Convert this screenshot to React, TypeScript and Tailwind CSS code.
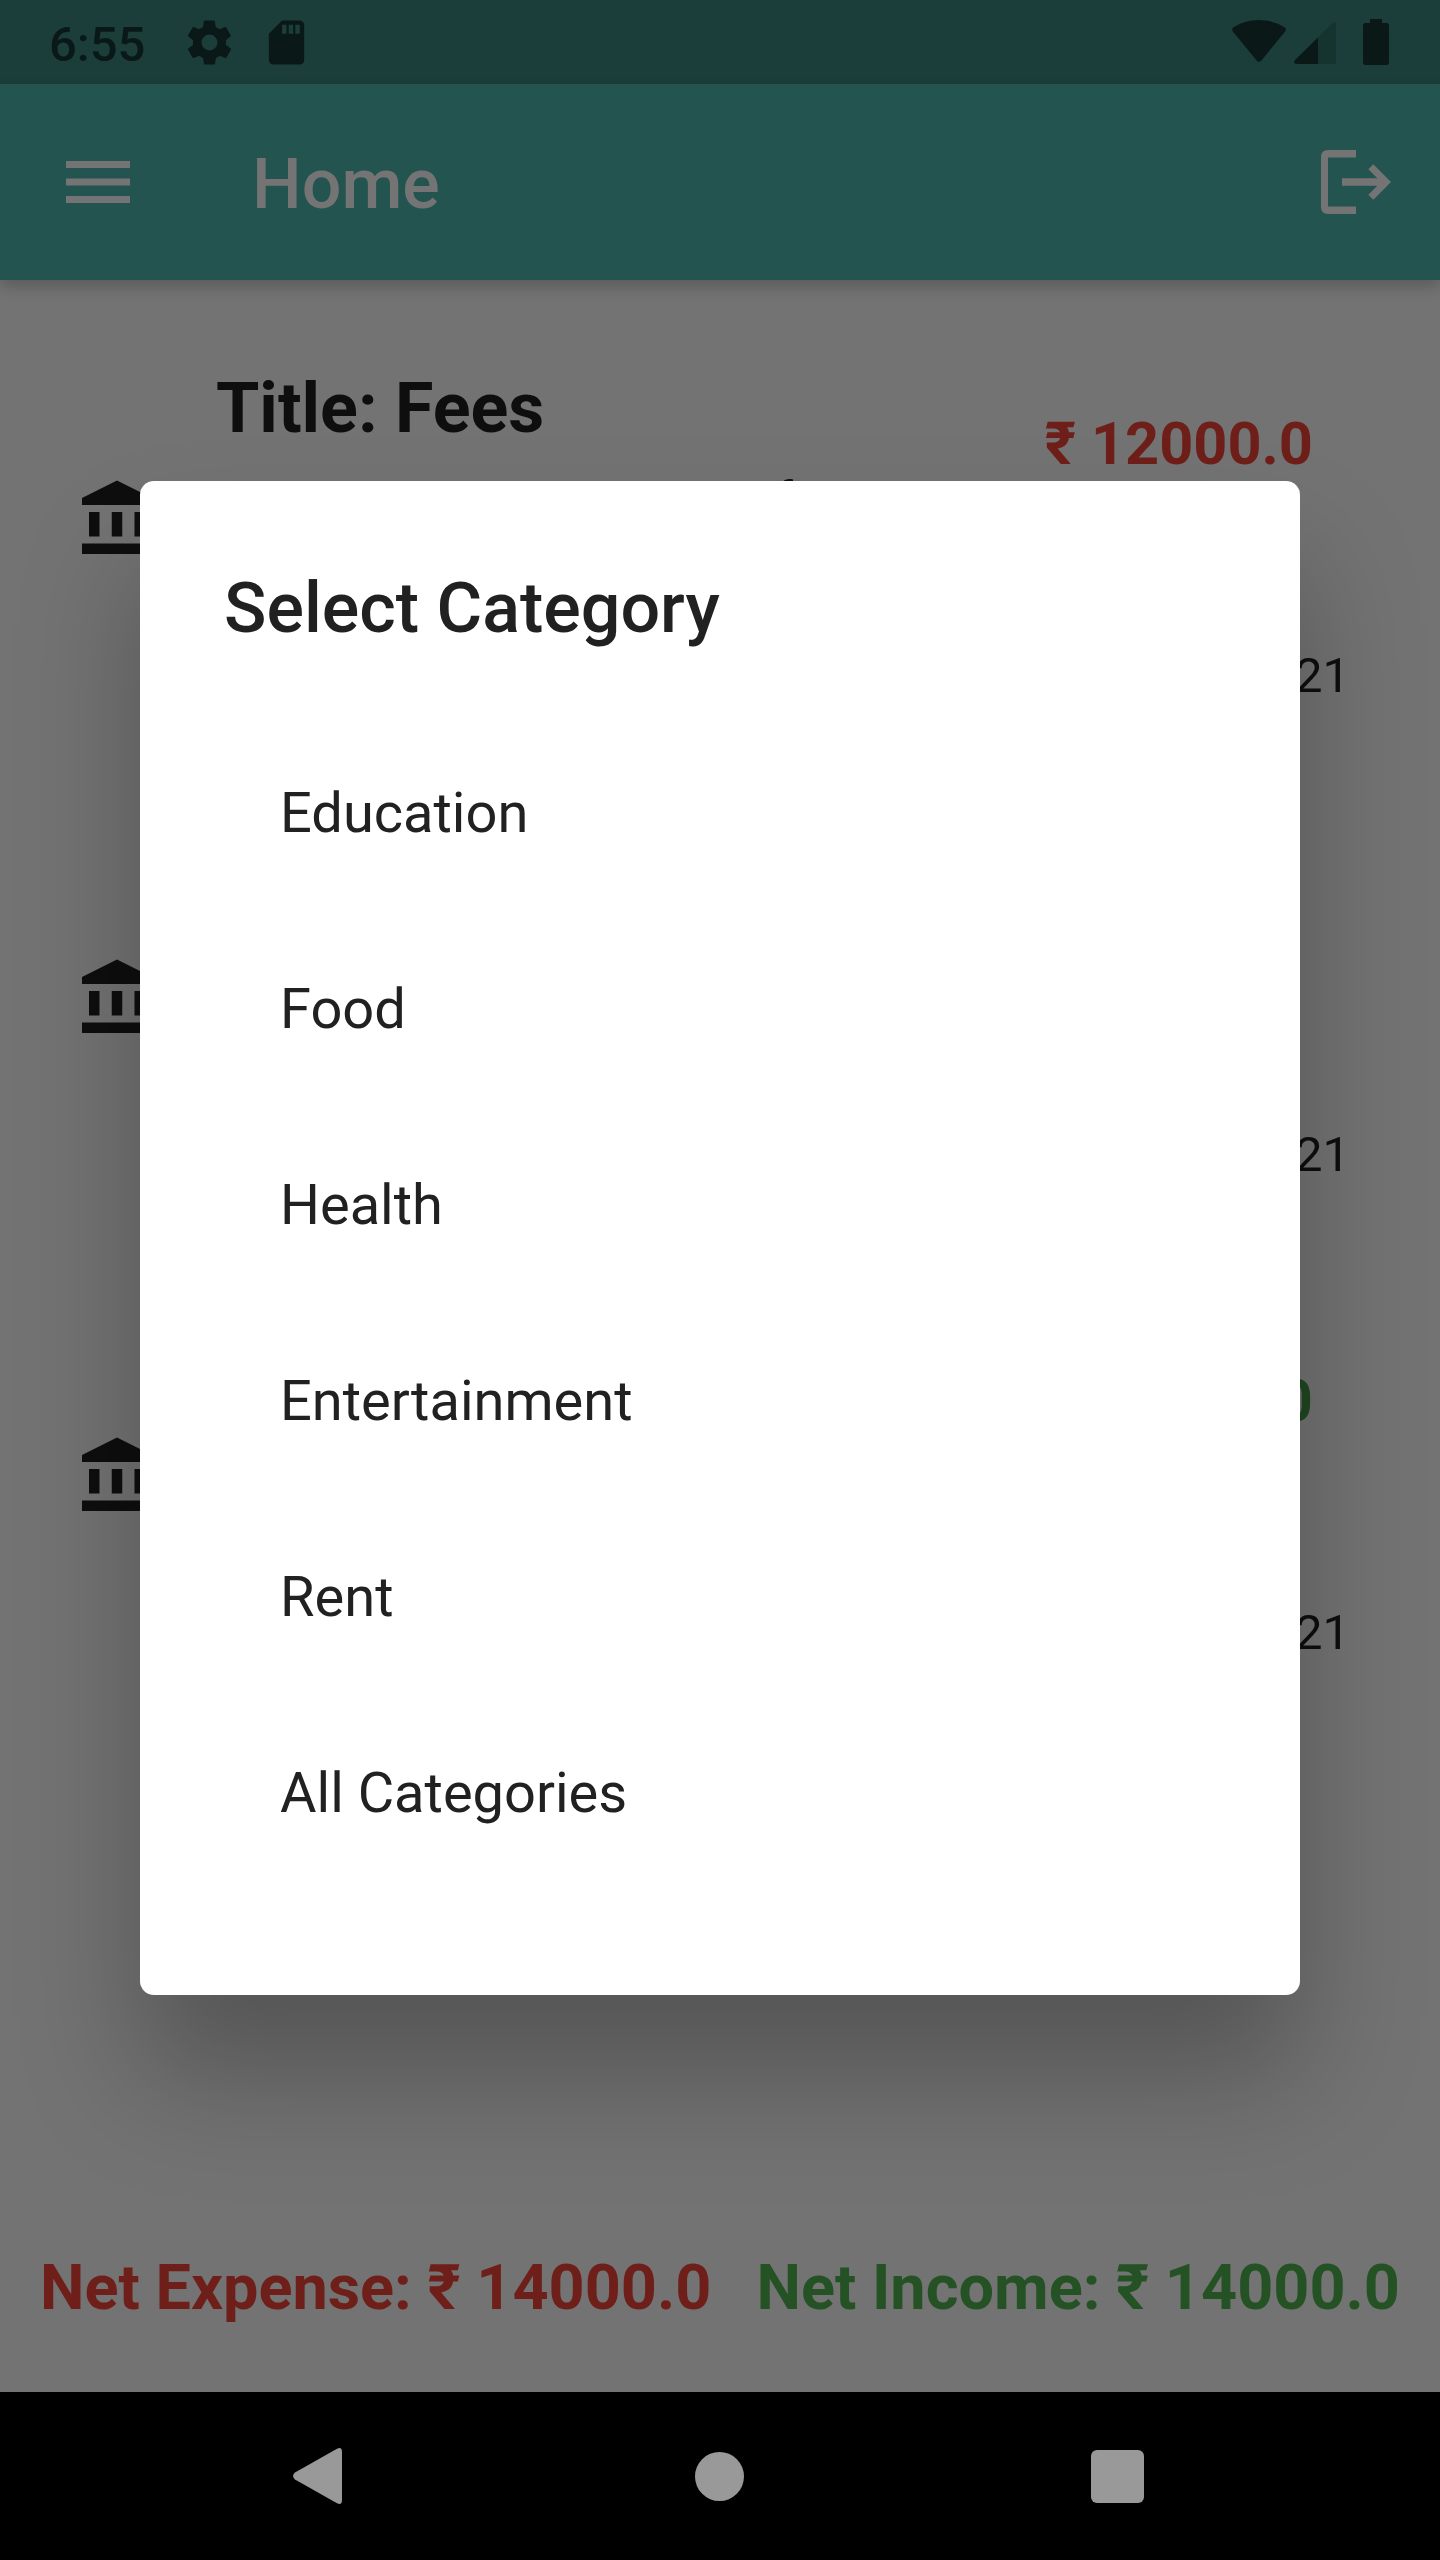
import React from "react";

const categories = ["Education", "Food", "Health", "Entertainment", "Rent", "All Categories"];

type Transaction = { id: number; title?: string; detail?: string; amount?: string; tone?: string; date: string };

const transactions: Transaction[] = [
  { id: 1, title: "Title: Fees", detail: "Description: Expenses of term", amount: "₹ 12000.0", tone: "text-[#6f1f1a]", date: "2021" },
  { id: 2, date: "2021" },
  { id: 3, amount: "₹ 14000.0", tone: "text-[#1f4720]", date: "2021" },
];

function StatusBar() {
  return (
    <div className="flex h-[84px] shrink-0 items-start bg-[#1b3e3a] pl-[49px] text-[#0a1917]">
      <span className="mt-4 w-[134px] text-[49px] leading-[57px] font-medium">6:55</span>
      <svg className="mt-4 h-[53px] w-[53px]" viewBox="0 0 24 24" fill="currentColor">
        <path d="M19.4 13c0-.3.1-.6.1-1s0-.7-.1-1l2.1-1.7c.2-.1.2-.4.1-.6l-2-3.5c-.1-.2-.4-.3-.6-.2l-2.5 1c-.5-.4-1.1-.7-1.7-1l-.4-2.6c0-.2-.2-.4-.5-.4h-4c-.2 0-.4.2-.5.4L9.1 5c-.6.3-1.2.6-1.7 1L4.9 5c-.2-.1-.5 0-.6.2l-2 3.5c-.1.2-.1.5.1.6L4.600 11c0 .3-.1.6-.1 1s0 .7.1 1l-2.200 1.700c-.2.100-.2.400-.1.600l2 3.500c.1.200.4.300.6.200l2.500-1c.5.400 1.100.7 1.700 1l.4 2.600c0 .2.200.4.500.4h4c.3 0 .5-.2.500-.4l.4-2.600c.6-.3 1.200-.6 1.700-1l2.500 1c.2.100.5 0 .6-.2l2-3.500c.1-.2.1-.5-.1-.6zM12 15.600a3.600 3.600 0 1 1 0-7.200 3.600 3.600 0 0 1 0 7.200z" />
      </svg>
      <svg className="mt-4 ml-[24px] h-[53px] w-[53px]" viewBox="0 0 24 24" fill="currentColor">
        <path d="M18 2h-8L4 8v12c0 1.100.9 2 2 2h12c1.100 0 2-.9 2-2V4c0-1.100-.9-2-2-2zm-6 6h-2V4h2v4zm3 0h-2V4h2v4zm3 0h-2V4h2v4z" />
      </svg>
      <svg className="mt-[19px] ml-auto h-[44px] w-[54px]" viewBox="0 0 54 44" fill="currentColor">
        <path d="M1.200 8.500Q12 1 27 1t25.800 7.500q1.800 1.800.5 3.700L29.200 41.700q-2.200 2-4.400 0L.7 12.200Q-.6 10.300 1.200 8.500z" />
      </svg>
      <svg className="mt-[21px] ml-2 h-[43px] w-[42px]" viewBox="0 0 42 43" fill="currentColor">
        <path opacity=".3" d="M24 16.500 38.500 2q3.500-2 3.500 1.500v37q0 2.500-2.500 2.500H24z" />
        <path d="M24 16.500V43H2.500q-4-.5-1.500-4z" />
      </svg>
      <svg className="mt-[19px] mr-[51px] ml-[27px] h-[46px] w-[26px]" viewBox="0 0 26 46" fill="currentColor">
        <path d="M7 0h12v4h4.500Q26 4 26 6.500v37q0 2.500-2.500 2.500h-21Q0 46 0 43.500v-37Q0 4 2.500 4H7z" />
      </svg>
    </div>
  );
}

function AppBar() {
  return (
    <header className="relative flex h-[196px] shrink-0 items-center bg-[#24544f] pr-[49px] pl-[66px] text-[#747474] shadow-[0_7px_14px_rgba(0,0,0,0.2)]">
      <svg className="h-[42px] w-16" viewBox="0 0 64 42" fill="currentColor">
        <path d="M0 0h64v7H0zM0 17.500h64v7H0zM0 35h64v7H0z" />
      </svg>
      <h1 className="mt-[3px] ml-[122px] text-[70px] leading-[82px] font-medium">Home</h1>
      <svg className="ml-auto h-16 w-[70px]" viewBox="0 0 70 64" fill="currentColor">
        <path d="M7 0h28v7.500H7v49h28V64H7q-7 0-7-7V7q0-7 7-7z" />
        <path d="M21 28.300h35.300l-9-9 5-5L70 32 52.300 49.700l-5-5 9-9H21z" />
      </svg>
    </header>
  );
}

function TransactionRow({ item }: { item: Transaction }) {
  return (
    <li className="flex h-[478.5px] shrink-0 pt-[87px] pr-[90px] pl-[75px]">
      <svg className="mt-[110px] h-[84px] w-[84px] shrink-0 text-[#0e0e0e]" viewBox="0 0 24 24" fill="currentColor">
        <path d="M4 10h3v7H4zM10.500 10h3v7h-3zM17 10h3v7h-3zM2 19h20v3H2zM12 1l10 5v2H2V6z" />
      </svg>
      <div className="ml-[57px] flex flex-col text-[#0e0e0e]">
        <span className="h-[82px] text-[70px] leading-[82px] font-bold">{item.title}</span>
        <span className="mt-[21px] text-[52.5px] leading-[62px] whitespace-nowrap">{item.detail}</span>
      </div>
      <div className="ml-auto flex flex-col items-end">
        <span className={`mt-[42px] mr-[37px] h-[70px] text-[59.5px] leading-[70px] font-bold ${item.tone ?? ""}`}>{item.amount}</span>
        <span className="mt-[168px] text-[49px] leading-[57px] text-[#0e0e0e]">{item.date}</span>
      </div>
    </li>
  );
}

function CategoryDialog() {
  return (
    <div role="dialog" className="absolute top-[481px] left-[140px] flex h-[1514px] w-[1160px] flex-col rounded-[14px] bg-white text-[#212121] shadow-[0_82px_120px_0_rgba(0,0,0,0.26)]">
      <h2 className="mt-[86px] ml-[84px] text-[70px] leading-[82px] font-medium">Select Category</h2>
      <ul className="mt-[66px] flex flex-col">
        {categories.map((name) => (
          <li key={name} className="flex h-[196px] items-center pl-[140px] text-[56px] leading-[66px]">{name}</li>
        ))}
      </ul>
    </div>
  );
}

function NavBar() {
  return (
    <nav className="relative flex h-[168px] shrink-0 items-center bg-black text-[#999]">
      <svg className="ml-[293px] h-14 w-[49px]" viewBox="0 0 49 56" fill="currentColor">
        <path d="M2 24.500 44 .8Q49-1.500 49 4v48q0 5.500-5 3.200L2 31.500q-4-3.500 0-7z" />
      </svg>
      <span className="ml-[353px] h-[49px] w-[49px] rounded-full bg-current" />
      <span className="ml-[347px] h-[53px] w-[53px] rounded-[6px] bg-current" />
    </nav>
  );
}

export default function App() {
  return (
    <div className="relative flex h-[2560px] w-[1440px] flex-col overflow-hidden bg-[#737373] font-['Roboto',sans-serif]">
      <StatusBar />
      <AppBar />
      <ul className="flex flex-1 flex-col">
        {transactions.map((item) => (
          <TransactionRow key={item.id} item={item} />
        ))}
      </ul>
      <footer className="mb-[67px] flex shrink-0 justify-between pr-10 pl-10 text-[63px] leading-[74px] font-bold whitespace-nowrap">
        <span className="text-[#6f1f19]">Net Expense: ₹ 14000.0</span>
        <span className="text-[#245224]">Net Income: ₹ 14000.0</span>
      </footer>
      <CategoryDialog />
      <NavBar />
    </div>
  );
}
